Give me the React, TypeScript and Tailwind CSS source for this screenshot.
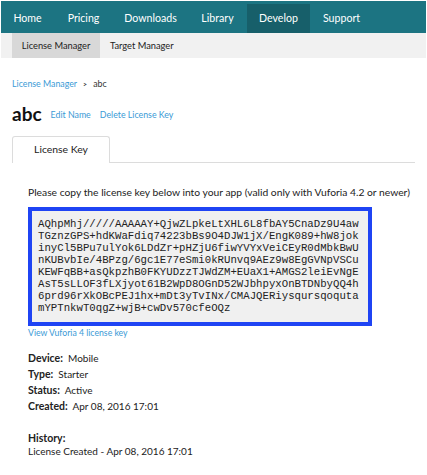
import React from "react";

const keyLines = [
  "AQhpMhj/////AAAAAY+QjwZLpkeLtXHL6L8fbAY5CnaDz9U4aw",
  "TGznzGPS+hdKWaFdiq74223bBs9O4DJW1jX/EngK089+hW8jok",
  "inyCl5BPu7ulYok6LDdZr+pHZjU6fiwYVYxVeiCEyR0dMbkBwU",
  "nKUBvbIe/4BPzg/6gc1E77eSmi0kRUnvq9AEz9w8EgGVNpVSCu",
  "KEWFqBB+asQkpzhB0FKYUDzzTJWdZM+EUaX1+AMGS2leiEvNgE",
  "AsT5sLLOF3fLXjyot61B2WpD8OGnD52WJbhpyxOnBTDNbyQQ4h",
  "6prd96rXkOBcPEJ1hx+mDt3yTvINx/CMAJQERiysqursqoquta",
  "mYPTnkwT0qgZ+wjB+cwDv570cfeOQz",
];

export default function App() {
  return (
    <div
      className="w-[427px] h-[475px] bg-white overflow-hidden pt-px px-px text-[#222]"
      style={{ fontFamily: "Lato, 'Open Sans', sans-serif" }}
    >
      <div className="flex h-[32px] bg-[#1c7482] pt-[3px] text-[10.6px] text-white">
        <div className="w-[53px] flex items-center justify-center">Home</div>
        <div className="w-[59px] flex items-center justify-center">Pricing</div>
        <div className="w-[75px] flex items-center justify-center">Downloads</div>
        <div className="w-[59px] flex items-center justify-center">Library</div>
        <div className="w-[63px] flex items-center justify-center bg-[#175f6a]">Develop</div>
        <div className="w-[63px] flex items-center justify-center">Support</div>
      </div>
      <div className="flex h-[25px] bg-[#f1f1f1] pl-[11px] text-[9.3px] text-[#222]">
        <div className="w-[88px] flex items-center justify-center bg-[#d8d8d8]">License Manager</div>
        <div className="flex items-center pl-[10px]">Target Manager</div>
      </div>

      <div className="px-[11px]">
        <div className="mt-[19px] flex items-center gap-[6px] text-[8.8px] h-[14px]">
          <span className="text-[#3a9ad6]">License Manager</span>
          <span className="text-[#333] text-[7px] font-bold">&gt;</span>
          <span className="text-[#333]">abc</span>
        </div>
        <div className="mt-[9px] flex items-center h-[26px]">
          <span className="text-[19px] font-bold text-[#111] leading-none">abc</span>
          <span className="ml-[9px] mt-[3px] text-[8.8px] text-[#3a9ad6]">Edit Name</span>
          <span className="ml-[9px] mt-[3px] text-[8.8px] text-[#3a9ad6]">Delete License Key</span>
        </div>
        <div className="mt-[10px] flex">
          <div className="w-[98px] h-[27px] border border-b-0 border-[#dcdcdc] rounded-t-[3px] flex items-center justify-center text-[10.4px] text-[#222]">
            License Key
          </div>
          <div className="flex-1 border-b border-[#dcdcdc]" />
        </div>

        <div className="pl-[16px]">
          <div className="mt-[23px] text-[10.3px] text-[#222] h-[14px] flex items-center whitespace-nowrap">
            Please copy the license key below into your app (valid only with Vuforia 4.2 or newer)
          </div>
          <div className="mt-[7px] w-[344px] h-[119px] border-[4px] border-[#1f44f4] bg-[#f0f0f0] pt-[7px] pl-[6px]">
            {keyLines.map((l, i) => (
              <div
                key={i}
                className="text-[10.7px] leading-[12px] text-[#222] whitespace-pre"
                style={{ fontFamily: "'Liberation Mono', 'Courier New', monospace" }}
              >
                {l}
              </div>
            ))}
          </div>
          <div className="mt-px text-[8.7px] text-[#3a9ad6] h-[12px] flex items-center">View Vuforia 4 license key</div>

          <div className="mt-[11px] flex flex-col text-[10px] text-[#222] leading-[16px]">
            <div><span className="font-bold text-[10.5px]">Device:</span>&nbsp; Mobile</div>
            <div><span className="font-bold text-[10.5px]">Type:</span>&nbsp; Starter</div>
            <div><span className="font-bold text-[10.5px]">Status:</span>&nbsp; Active</div>
            <div><span className="font-bold text-[10.5px]">Created:</span>&nbsp; Apr 08, 2016 17:01</div>
            <div className="mt-[16px] font-bold text-[10.5px]">History:</div>
            <div className="-mt-[3px]">License Created - Apr 08, 2016 17:01</div>
          </div>
        </div>
      </div>
    </div>
  );
}
